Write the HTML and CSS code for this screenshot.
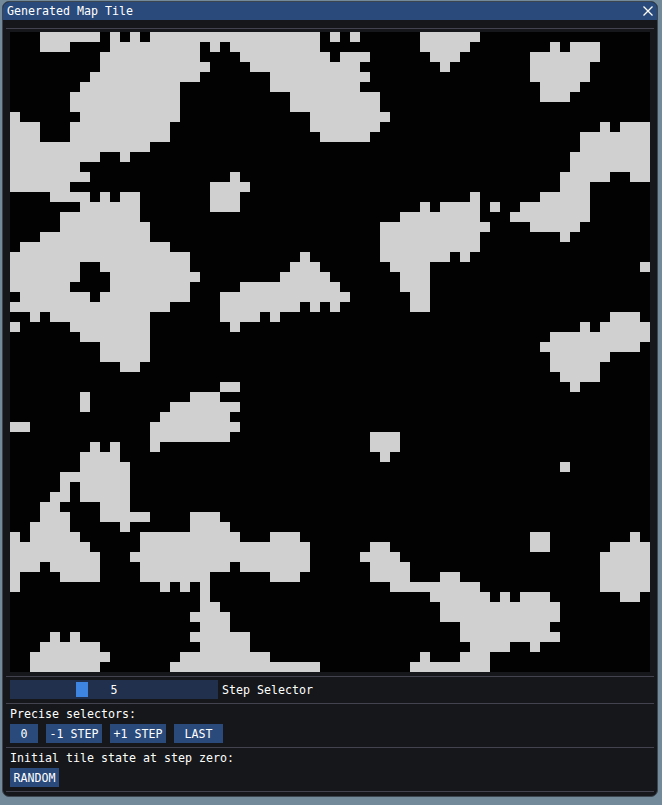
FILE: index.html
```html
<!DOCTYPE html>
<html>
<head>
   <title>Generated Map Tile</title>
   <link rel="stylesheet" href="styles.css">
</head>
<body>
<div class="window">
   <div class="titlebar">
      <span>Generated Map Tile</span>
      <svg class="close" width="10" height="10" viewBox="0 0 10 10"><path d="M0.5 0.5L9.5 9.5M9.5 0.5L0.5 9.5"/></svg>
   </div>
   <div class="content">
      <div class="sep"></div>

      <!-- 64 x 64 tiles, one line per row: start column, end column -->
      <svg class="map" width="640" height="640" viewBox="0 0 64 64" shape-rendering="crispEdges">
         <path d="
            M3 .5H9M10 .5H11M12 .5H13M14 .5H31M32 .5H33M34 .5H35M41 .5H47
            M3 1.5H6M10 1.5H19M20 1.5H21M22 1.5H31M41 1.5H46M54 1.5H55M56 1.5H59
            M9 2.5H19M23 2.5H32M33 2.5H36M42 2.5H45M52 2.5H59
            M9 3.5H20M24 3.5H35M43 3.5H44M52 3.5H58
            M8 4.5H19M26 4.5H36M52 4.5H58
            M7 5.5H17M26 5.5H35M53 5.5H57
            M6 6.5H17M28 6.5H37M53 6.5H56
            M6 7.5H17M28 7.5H37
            M0 8.5H1M7 8.5H17M30 8.5H38
            M0 9.5H3M6 9.5H16M30 9.5H37M59 9.5H60M61 9.5H64
            M0 10.5H3M6 10.5H16M31 10.5H36M57 10.5H64
            M0 11.5H14M57 11.5H64
            M0 12.5H9M11 12.5H12M56 12.5H64
            M0 13.5H7M56 13.5H64
            M0 14.5H8M22 14.5H23M55 14.5H60M62 14.5H64
            M0 15.5H6M20 15.5H24M55 15.5H58
            M4 16.5H8M9 16.5H10M11 16.5H13M20 16.5H23M46 16.5H47M53 16.5H58
            M7 17.5H13M20 17.5H23M41 17.5H42M43 17.5H47M48 17.5H49M51 17.5H58
            M5 18.5H13M39 18.5H47M50 18.5H58
            M5 19.5H14M37 19.5H48M52 19.5H57
            M3 20.5H14M37 20.5H47M55 20.5H56
            M1 21.5H16M37 21.5H47
            M0 22.5H18M29 22.5H30M37 22.5H44M45 22.5H46
            M0 23.5H7M9 23.5H18M28 23.5H31M38 23.5H42M63 23.5H64
            M0 24.5H7M10 24.5H19M27 24.5H32M39 24.5H42
            M0 25.5H6M10 25.5H18M23 25.5H33M39 25.5H42
            M1 26.5H8M9 26.5H18M21 26.5H34M40 26.5H42
            M0 27.5H16M21 27.5H29M30 27.5H31M32 27.5H33M40 27.5H42
            M2 28.5H3M4 28.5H14M21 28.5H25M26 28.5H27M60 28.5H63
            M0 29.5H1M6 29.5H14M22 29.5H23M57 29.5H58M59 29.5H64
            M7 30.5H14M54 30.5H64
            M9 31.5H14M53 31.5H63
            M9 32.5H14M54 32.5H60
            M11 33.5H13M54 33.5H59
            M55 34.5H59
            M21 35.5H23M56 35.5H57
            M7 36.5H8M18 36.5H21
            M7 37.5H8M16 37.5H23
            M15 38.5H22
            M0 39.5H2M14 39.5H23
            M14 40.5H22M36 40.5H39
            M8 41.5H9M10 41.5H11M14 41.5H15M36 41.5H39
            M7 42.5H11M37 42.5H38
            M7 43.5H12M55 43.5H56
            M5 44.5H12
            M5 45.5H6M7 45.5H12
            M4 46.5H6M7 46.5H12
            M3 47.5H5M9 47.5H12
            M3 48.5H6M9 48.5H14M18 48.5H21
            M2 49.5H6M11 49.5H12M18 49.5H22
            M0 50.5H1M2 50.5H7M13 50.5H23M26 50.5H29M52 50.5H54M62 50.5H63
            M0 51.5H8M13 51.5H30M36 51.5H38M52 51.5H54M60 51.5H64
            M0 52.5H9M12 52.5H30M35 52.5H39M59 52.5H64
            M0 53.5H3M4 53.5H9M13 53.5H22M23 53.5H30M36 53.5H40M59 53.5H64
            M0 54.5H1M5 54.5H9M13 54.5H20M26 54.5H29M36 54.5H40M43 54.5H45M59 54.5H64
            M0 55.5H1M15 55.5H16M17 55.5H18M19 55.5H20M38 55.5H47M59 55.5H64
            M19 56.5H20M42 56.5H48M49 56.5H50M51 56.5H54M61 56.5H63
            M19 57.5H21M43 57.5H55
            M18 58.5H22M43 58.5H55
            M19 59.5H22M45 59.5H54
            M4 60.5H5M6 60.5H7M18 60.5H24M45 60.5H55
            M3 61.5H9M19 61.5H24M46 61.5H50M52 61.5H53
            M2 62.5H10M17 62.5H26M41 62.5H42M45 62.5H48
            M2 63.5H9M16 63.5H31M40 63.5H48
         "/>
      </svg>

      <div class="sep"></div>

      <div class="row">
         <div class="slider">
            <div class="grab"></div>
            <span>5</span>
         </div>
         <span>Step Selector</span>
      </div>

      <div class="sep"></div>

      <div class="line">Precise selectors:</div>
      <div class="buttons">
         <div class="btn btn-zero">0</div>
         <div class="btn">-1 STEP</div>
         <div class="btn">+1 STEP</div>
         <div class="btn btn-last">LAST</div>
      </div>

      <div class="sep"></div>

      <div class="line">Initial tile state at step zero:</div>
      <div class="buttons">
         <div class="btn">RANDOM</div>
      </div>

      <div class="sep"></div>
   </div>
</div>
</body>
</html>
```

FILE: styles.css
```css
* { margin: 0; padding: 0; box-sizing: border-box; }
html, body { height: 100%; }
body {
   background: #728a9a;
   color: #fff;
   font-family: "DejaVu Sans Mono", "Liberation Mono", monospace;
   font-size: 11.63px;
   line-height: 15px;
   padding: 1px 0 0 2px;
}

.window {
   width: 656px;
   height: 796px;
   background: #15171a;
   border: 1px solid #3c4650;
   border-radius: 7px;
   overflow: hidden;
}

.titlebar {
   display: flex;
   align-items: center;
   justify-content: space-between;
   height: 18px;
   padding: 0 4px 0 4px;
   background: #294a7a;
}
.close { stroke: #fff; stroke-width: 1.3; fill: none; }

.content { display: flex; flex-direction: column; align-items: flex-start; padding: 4px 7px 0; }

.sep {
   align-self: stretch;
   height: 1px;
   margin: 4px -4px 3px;
   background: #43434f;
}

.map { display: block; background: #020202; stroke: #d0d0d0; stroke-width: 1; fill: none; }

.row { display: flex; gap: 4px; height: 19px; line-height: 21px; }

.slider {
   position: relative;
   width: 208px;
   height: 19px;
   text-align: center;
   background: #21304d;
}
.grab {
   position: absolute;
   left: 66px;
   top: 2px;
   width: 12px;
   height: 15px;
   background: #3d85e0;
}

.line { height: 13px; margin-bottom: 4px; }

.buttons { display: flex; gap: 8px; }
.btn {
   height: 19px;
   padding: 3px 3.5px;
   background: #294a7a;
}
.btn-zero { width: 28px; text-align: center; }
.btn-last { width: 49px; text-align: center; }
```
